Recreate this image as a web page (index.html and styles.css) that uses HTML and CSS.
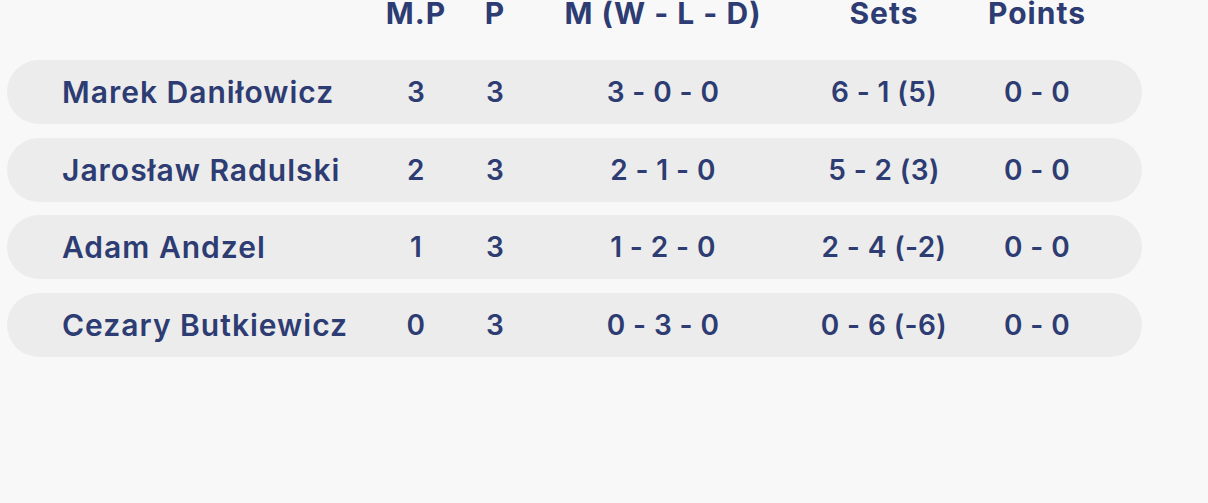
FILE: index.html
```html
<!DOCTYPE html>
<html>
<head>
<meta charset="utf-8">
<link rel="stylesheet" href="styles.css">
</head>
<body>
<div class="table">
  <div class="grid head">
    <div></div>
    <div class="c">M.P</div>
    <div class="c">P</div>
    <div class="c">M (W - L - D)</div>
    <div class="c">Sets</div>
    <div class="c">Points</div>
  </div>
  <div class="rows">
    <div class="grid row">
      <div class="name">Marek Daniłowicz</div>
      <div class="c">3</div><div class="c">3</div><div class="c">3 - 0 - 0</div><div class="c">6 - 1 (5)</div><div class="c">0 - 0</div>
    </div>
    <div class="grid row">
      <div class="name">Jarosław Radulski</div>
      <div class="c">2</div><div class="c">3</div><div class="c">2 - 1 - 0</div><div class="c">5 - 2 (3)</div><div class="c">0 - 0</div>
    </div>
    <div class="grid row">
      <div class="name">Adam Andzel</div>
      <div class="c">1</div><div class="c">3</div><div class="c">1 - 2 - 0</div><div class="c">2 - 4 (-2)</div><div class="c">0 - 0</div>
    </div>
    <div class="grid row">
      <div class="name">Cezary Butkiewicz</div>
      <div class="c">0</div><div class="c">3</div><div class="c">0 - 3 - 0</div><div class="c">0 - 6 (-6)</div><div class="c">0 - 0</div>
    </div>
  </div>
</div>
</body>
</html>
```
FILE: styles.css
```css
html, body {
  margin: 0;
  padding: 0;
  background: #f8f8f8;
}
body {
  font-family: Inter, "Noto Sans", sans-serif;
  color: #2d3c72;
  width: 1208px;
  height: 503px;
  overflow: hidden;
}
.table {
  padding-left: 7px;
  width: 1135px;
}
.grid {
  display: grid;
  grid-template-columns: 369px 80px 78px 258px 184px 122px 44px;
  align-items: center;
}
.head {
  height: 26px;
  margin-bottom: 34px;
  font-size: 30px;
  font-weight: 700;
  line-height: 26px;
  letter-spacing: 1px;
}
.rows {
  display: flex;
  flex-direction: column;
  gap: 13.5px;
}
.row {
  height: 64px;
  border-radius: 32px;
  background: #ececec;
  font-size: 28px;
  font-weight: 600;
  letter-spacing: 0.4px;
}
.name {
  padding-left: 55px;
  white-space: nowrap;
  font-size: 30px;
  letter-spacing: 1px;
}
.c {
  text-align: center;
  white-space: nowrap;
}
```
